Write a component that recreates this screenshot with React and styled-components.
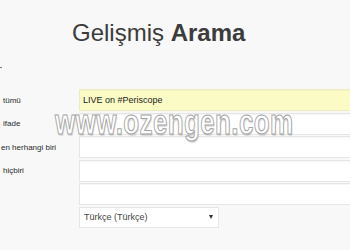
import styled, { createGlobalStyle } from "styled-components";

const Global = createGlobalStyle`
  html, body {
    margin: 0;
    padding: 0;
    background: #f8f8f8;
    overflow: hidden;
  }
  body {
    font-family: "Liberation Sans", Arial, sans-serif;
    width: 350px;
    height: 250px;
  }
`;

const Page = styled.div`
  position: relative;
  width: 350px;
  height: 250px;
  overflow: hidden;
`;

const Title = styled.h1`
  margin: 0;
  padding: 18px 0 0 72px;
  font-size: 24px;
  font-weight: normal;
  line-height: 30px;
  color: #3c3c3c;

  b {
    font-weight: bold;
  }
`;

const Tick = styled.div`
  width: 2px;
  height: 1px;
  margin: 19px 0 0 0;
  background: #777;
`;

const Form = styled.div`
  display: grid;
  grid-template-columns: 79px 300px;
  grid-auto-rows: 22px;
  row-gap: 1.6px;
  margin-top: 21px;
`;

const Label = styled.div`
  display: flex;
  align-items: center;
  padding-left: ${(p) => p.$indent || 2}px;
  font-size: 8px;
  color: #2a2a2a;
  white-space: nowrap;
  overflow: hidden;
`;

const Field = styled.div`
  box-sizing: border-box;
  height: 22px;
  display: flex;
  align-items: center;
  padding: 0 3px;
  font-size: 9px;
  color: #222;
  background: ${(p) => (p.$filled ? "#fbfbc6" : "#fff")};
  border: 1px solid ${(p) => (p.$filled ? "#ececc0" : "#e6e6e6")};
  box-shadow: inset 0 1px 1px rgba(0, 0, 0, 0.04);
`;

const Select = styled.div`
  box-sizing: border-box;
  width: 140px;
  height: 21px;
  display: flex;
  align-items: center;
  justify-content: space-between;
  padding: 0 5px 0 4px;
  font-size: 9px;
  color: #444;
  background: #fff;
  border: 1px solid #e6e6e6;
`;

const Arrow = styled.span`
  width: 0;
  height: 0;
  border-left: 2.5px solid transparent;
  border-right: 2.5px solid transparent;
  border-top: 4px solid #333;
`;

const Watermark = styled.div`
  position: absolute;
  left: 55px;
  top: 108px;
  font-family: "Liberation Sans", Arial, sans-serif;
  font-weight: bold;
  font-size: 32px;
  line-height: 26px;
  letter-spacing: 0.5px;
  color: #fff;
  -webkit-text-stroke: 1px #a4a4a4;
  text-shadow: 1px 1px 1px rgba(0, 0, 0, 0.12);
  transform: scale(0.81, 1.1);
  transform-origin: left top;
  pointer-events: none;
  white-space: nowrap;
`;

const rows = [
  { label: "tümü", value: "LIVE on #Periscope", filled: true, indent: 3 },
  { label: "ifade", value: "", indent: 3 },
  { label: "en herhangi biri", value: "", indent: 1 },
  { label: "hiçbiri", value: "", indent: 3 },
  { label: "", value: "" },
];

const App = () => {
  return (
    <Page>
      <Global />
      <Title>
        Gelişmiş <b>Arama</b>
      </Title>
      <Tick />
      <Form>
        {rows.map((r, i) => [
          <Label key={"l" + i} $indent={r.indent}>
            {r.label}
          </Label>,
          <Field key={"f" + i} $filled={r.filled}>
            {r.value}
          </Field>,
        ])}
        <Label />
        <Select>
          Türkçe (Türkçe)
          <Arrow />
        </Select>
      </Form>
      <Watermark>www.ozengen.com</Watermark>
    </Page>
  );
};

export default App;
